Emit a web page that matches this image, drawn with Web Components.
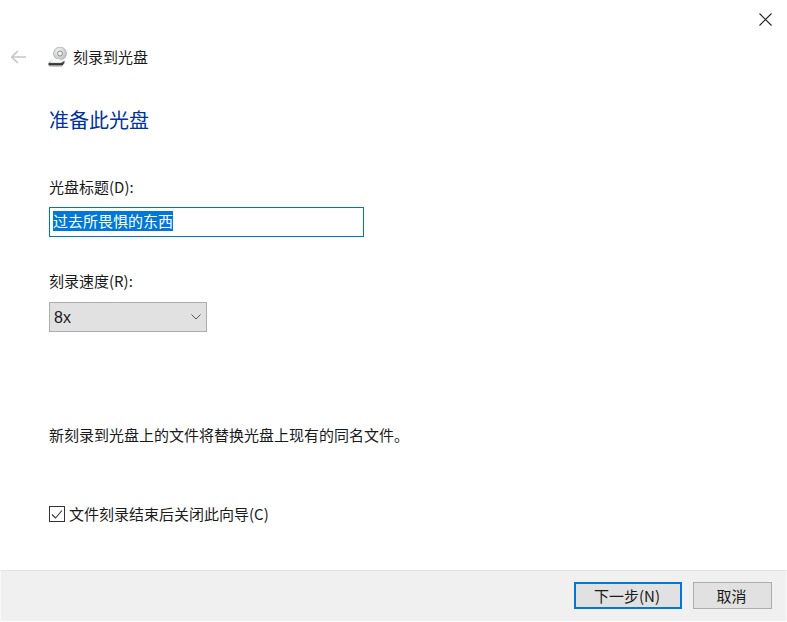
<!DOCTYPE html>
<html lang="zh">
<head>
<meta charset="utf-8">
<title>刻录到光盘</title>
<style>
  html, body { margin: 0; padding: 0; background: #fff; }
  body { font: 15px "Noto Sans CJK SC", "Liberation Sans", sans-serif; color: #1a1a1a; }
</style>
</head>
<body>
<burn-wizard>
  <wizard-nav title-text="刻录到光盘"></wizard-nav>
  <wizard-field label="光盘标题(D):" style="margin-top:42px;--label-gap:10px">
    <title-input value="过去所畏惧的东西"></title-input>
  </wizard-field>
  <wizard-field label="刻录速度(R):" style="margin-top:34px;--label-gap:11px">
    <speed-select value="8x"></speed-select>
  </wizard-field>
  <wizard-note>新刻录到光盘上的文件将替换光盘上现有的同名文件。</wizard-note>
  <wizard-check>文件刻录结束后关闭此向导(C)</wizard-check>
  <wizard-footer slot="footer">
    <wizard-button primary style="width:108px">下一步(N)</wizard-button>
    <wizard-button style="width:79px">取消</wizard-button>
  </wizard-footer>
</burn-wizard>

<script>
const FONT = `"Noto Sans CJK SC", "Liberation Sans", sans-serif`;

class BurnWizard extends HTMLElement {
  connectedCallback() {
    this.attachShadow({ mode: "open" }).innerHTML = `
    <style>
      :host { display: flex; flex-direction: column; width: 787px; height: 622px; overflow: hidden; background: #fff; }
      .main { flex: 1; display: flex; flex-direction: column; padding: 0 0 0 49px; min-height: 0; }
      .bottom { height: 1px; background: #fff; }
    </style>
    <div class="main"><slot></slot></div>
    <slot name="footer"></slot>
    <div class="bottom"></div>`;
  }
}

class WizardNav extends HTMLElement {
  connectedCallback() {
    let title = this.getAttribute("title-text");
    this.attachShadow({ mode: "open" }).innerHTML = `
    <style>
      :host { display: block; margin-left: -49px; position: relative; }
      .close { position: absolute; top: 12px; left: 758px; width: 15px; height: 15px; }
      .top { box-sizing: border-box; padding: 43px 0 0 11px; display: flex; align-items: center; height: 71px; }
      .back { width: 15px; height: 14px; margin-right: 22px; flex: none; }
      .disc { width: 19px; height: 20px; margin-right: 6px; flex: none; }
      .name { font-size: 15px; line-height: 28px; color: #1a1a1a; }
      h1 { margin: 0 0 0 49px; padding-top: 34px; font-weight: 400; font-size: 20px; line-height: 30px; color: #003399; }
    </style>
    <svg class="close" viewBox="0 0 15 15"><path d="M1.5 1.5 13.5 13.5M13.5 1.5 1.5 13.5" stroke="#222" stroke-width="1.1" fill="none"/></svg>
    <div class="top">
      <svg class="back" viewBox="0 0 15 14"><path d="M0.800 7H15M6.800 1 0.800 7 6.800 13" stroke="#c6c6c6" stroke-width="1.7" fill="none"/></svg>
      <svg class="disc" viewBox="0 0 19 20">
        <defs>
          <radialGradient id="d" cx=".4" cy=".35" r=".75"><stop offset="0" stop-color="#f4f5f4"/><stop offset="1" stop-color="#b4b9b7"/></radialGradient>
          <linearGradient id="b" x1="0" y1="0" x2="0" y2="1"><stop offset="0" stop-color="#777"/><stop offset="1" stop-color="#2b2b2b"/></linearGradient>
        </defs>
        <circle cx="12" cy="6.500" r="6.500" fill="url(#d)" stroke="#a3a8a6" stroke-width=".7"/>
        <circle cx="12" cy="6.500" r="2.500" fill="#e3e6e4" stroke="#858b89" stroke-width=".9"/>
        <circle cx="12" cy="6.500" r=".9" fill="#fff"/>
        <path d="M4.500 12 0.500 16V18.500H14.500L16.500 16V13.500L13 15.500H3Z" fill="url(#b)"/>
        <path d="M4.500 12 1 15.800H13L16.500 13.500 10 12Z" fill="#f8f8f8"/>
        <path d="M1.500 19.300H14" stroke="#bdbdbd" stroke-width="1"/>
      </svg>
      <span class="name">${title}</span>
    </div>
    <h1>准备此光盘</h1>`;
  }
}

class WizardField extends HTMLElement {
  connectedCallback() {
    this.attachShadow({ mode: "open" }).innerHTML = `
    <style>
      :host { display: block; }
      label { display: block; font-size: 15px; line-height: 20px; margin-bottom: var(--label-gap, 9px); color: #1a1a1a; }
    </style>
    <label>${this.getAttribute("label")}</label>
    <slot></slot>`;
  }
}

class TitleInput extends HTMLElement {
  connectedCallback() {
    this.attachShadow({ mode: "open" }).innerHTML = `
    <style>
      :host { display: flex; align-items: center; box-sizing: border-box; width: 315px; height: 30px; border: 1px solid #0078b4; padding: 0 0 3px 3px; background: #fff; }
      .sel { background: #0078d7; color: #fff; font-size: 15px; line-height: 20px; height: 20px; }
    </style>
    <span class="sel">${this.getAttribute("value")}</span>`;
  }
}

class SpeedSelect extends HTMLElement {
  connectedCallback() {
    this.attachShadow({ mode: "open" }).innerHTML = `
    <style>
      :host { display: flex; align-items: center; justify-content: space-between; box-sizing: border-box; width: 158px; height: 30px; border: 1px solid #adadad; background: #e1e1e1; padding: 1px 5px 0 4px; font-size: 16px; color: #1a1a1a; font-family: "Liberation Sans", ${FONT}; }
      svg { width: 10px; height: 6px; margin-top: -1px; }
    </style>
    <span>${this.getAttribute("value")}</span>
    <svg viewBox="0 0 10 6"><path d="M.5.5 5 5 9.500.5" stroke="#555" stroke-width="1" fill="none"/></svg>`;
  }
}

class WizardNote extends HTMLElement {
  connectedCallback() {
    this.attachShadow({ mode: "open" }).innerHTML = `
    <style>:host { display: block; margin-top: 92px; font-size: 15px; line-height: 22px; color: #1a1a1a; }</style>
    <slot></slot>`;
  }
}

class WizardCheck extends HTMLElement {
  connectedCallback() {
    this.attachShadow({ mode: "open" }).innerHTML = `
    <style>
      :host { display: flex; align-items: center; gap: 4px; margin-top: 57px; font-size: 15px; line-height: 22px; color: #1a1a1a; }
      .box { width: 16px; height: 16px; box-sizing: border-box; border: 1px solid #333; display: flex; flex: none; background: #fff; }
      svg { width: 14px; height: 14px; }
    </style>
    <span class="box"><svg viewBox="0 0 14 14"><path d="M2 7.500 5.500 11 12 3.500" stroke="#333" stroke-width="1.1" fill="none"/></svg></span>
    <span><slot></slot></span>`;
  }
}

class WizardFooter extends HTMLElement {
  connectedCallback() {
    this.attachShadow({ mode: "open" }).innerHTML = `
    <style>
      :host { display: flex; align-items: center; justify-content: flex-end; gap: 11px; flex: none; box-sizing: border-box; height: 51px; padding: 0 14px 1px 0; background: #f0f0f0; border-top: 1px solid #e3e3e3; border-left: 1px solid #f8f8f8; border-right: 1px solid #f8f8f8; }
    </style>
    <slot></slot>`;
  }
}

class WizardButton extends HTMLElement {
  connectedCallback() {
    this.attachShadow({ mode: "open" }).innerHTML = `
    <style>
      :host { display: flex; align-items: center; justify-content: center; box-sizing: border-box; height: 27px; padding-right: 2px; background: #e1e1e1; border: 1px solid #adadad; font-size: 15px; color: #1a1a1a; }
      :host([primary]) { border: 2px solid #0078d7; }
    </style>
    <slot></slot>`;
  }
}

customElements.define("burn-wizard", BurnWizard);
customElements.define("wizard-nav", WizardNav);
customElements.define("wizard-field", WizardField);
customElements.define("title-input", TitleInput);
customElements.define("speed-select", SpeedSelect);
customElements.define("wizard-note", WizardNote);
customElements.define("wizard-check", WizardCheck);
customElements.define("wizard-footer", WizardFooter);
customElements.define("wizard-button", WizardButton);
</script>
</body>
</html>
